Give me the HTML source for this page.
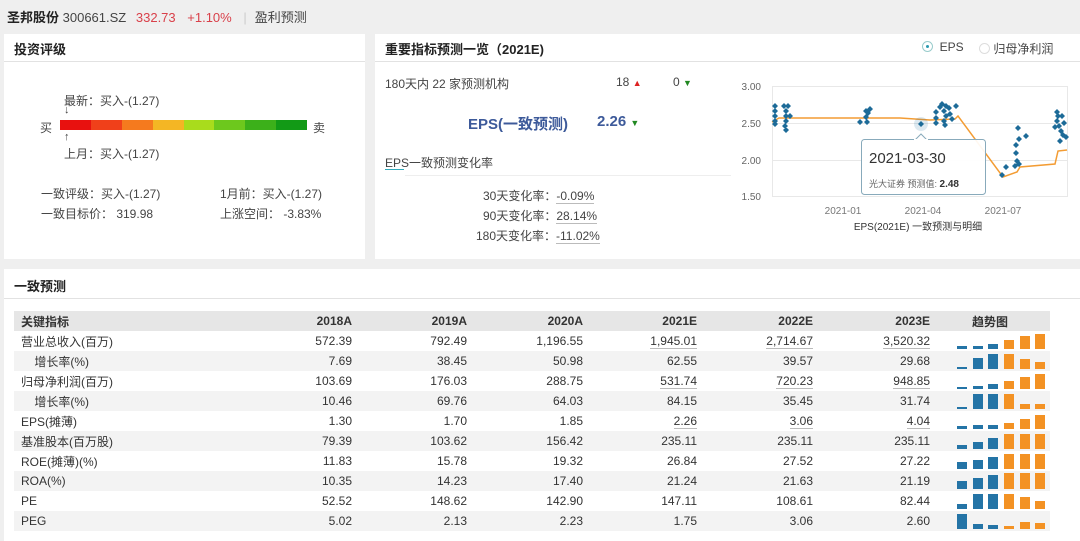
<!DOCTYPE html>
<html><head><meta charset="utf-8">
<style>
*{margin:0;padding:0;box-sizing:border-box}
body{width:1080px;height:541px;background:#efefef;font-family:"Liberation Sans","Noto Sans CJK SC",sans-serif;font-size:12px;color:#333;position:relative;overflow:hidden}
.a{position:absolute;white-space:nowrap}
.panel{position:absolute;background:#fff}
.ttl{position:absolute;left:0;right:0;top:0;height:28px;border-bottom:1px solid #e2e2e2;font-weight:bold;font-size:13px;padding:5px 0 0 10px;color:#222}
.g{color:#444}
table{position:absolute;left:14px;top:311px;width:1036px;border-collapse:collapse;font-size:12px}
td{height:20px;padding:0;text-align:right;color:#333}
td:first-child{text-align:left;padding-left:7px}
tr.h td{background:#e6e6e6;font-weight:bold;color:#333}
tr.s td{background:#f3f3f3}
.u{border-bottom:1px solid #bbb;line-height:13px;display:inline-block}
</style></head><body>
<div class="a" style="left:7px;top:7px;font-size:13px"><b style="color:#222">圣邦股份</b> <span class="g">300661.SZ</span> <span style="color:#d9404a;margin-left:6px">332.73</span> <span style="color:#d9404a;margin-left:8px">+1.10%</span> <span style="color:#ccc;margin:0 8px">|</span><span class="g">盈利预测</span></div>

<div class="panel" style="left:4px;top:34px;width:361px;height:225px">
 <div class="ttl">投资评级</div>
</div>
<div class="a g" style="left:64px;top:92px">最新：买入-(1.27)</div>
<div class="a g" style="left:64px;top:104px;font-size:11px">↓</div>
<div class="a g" style="left:40px;top:119px">买</div>
<div class="a g" style="left:313px;top:119px">卖</div>
<div class="a" style="left:60px;top:120px;width:247px;height:10px;display:flex">
<div style="flex:1;background:#e8110f"></div><div style="flex:1;background:#f0401a"></div><div style="flex:1;background:#f57a1e"></div><div style="flex:1;background:#f4b624"></div><div style="flex:1;background:#a9dc1c"></div><div style="flex:1;background:#6dc81d"></div><div style="flex:1;background:#3cb01a"></div><div style="flex:1;background:#129a16"></div></div>
<div class="a g" style="left:64px;top:131px;font-size:11px">↑</div>
<div class="a g" style="left:64px;top:145px">上月：买入-(1.27)</div>
<div class="a g" style="left:41px;top:185px">一致评级：买入-(1.27)</div>
<div class="a g" style="left:41px;top:205px">一致目标价：&nbsp;319.98</div>
<div class="a g" style="left:220px;top:185px">1月前：买入-(1.27)</div>
<div class="a g" style="left:220px;top:205px">上涨空间：&nbsp;-3.83%</div>

<div class="panel" style="left:375px;top:34px;width:705px;height:225px">
 <div class="ttl">重要指标预测一览（2021E)</div>
</div>
<div class="a g" style="left:922px;top:40px;font-size:12px"><span style="display:inline-block;width:11px;height:11px;border:1px solid #9cc;border-radius:50%;vertical-align:-1px;position:relative"><span style="position:absolute;left:3px;top:3px;width:3px;height:3px;background:#2a9ab0;border-radius:50%"></span></span>&nbsp; EPS</div>
<div class="a g" style="left:979px;top:40px"><span style="display:inline-block;width:11px;height:11px;border:1px solid #ddd;border-radius:50%;vertical-align:-1px"></span>&nbsp;归母净利润</div>
<div class="a g" style="left:385px;top:75px">180天内 22 家预测机构</div>
<div class="a g" style="left:616px;top:75px">18 <span style="color:#d22;font-size:9px">▲</span></div>
<div class="a g" style="left:673px;top:75px">0 <span style="color:#282;font-size:9px">▼</span></div>
<div class="a" style="left:468px;top:113px;font-size:15px;font-weight:bold;color:#3d5a9a">EPS(一致预测)</div>
<div class="a" style="left:597px;top:113px;font-size:15px;font-weight:bold;color:#3d5a9a">2.26 <span style="color:#282;font-size:9px">▼</span></div>
<div class="a g" style="left:385px;top:154px">EPS一致预测变化率</div>
<div class="a" style="left:385px;top:169px;width:19px;height:1px;background:#3ab"></div>
<div class="a" style="left:405px;top:175px;width:326px;height:1px;background:#eee"></div>
<div class="a g" style="left:483px;top:187px">30天变化率：<span class="u">-0.09%</span></div>
<div class="a g" style="left:483px;top:207px">90天变化率：<span class="u">28.14%</span></div>
<div class="a g" style="left:476px;top:227px">180天变化率：<span class="u">-11.02%</span></div>

<svg class="a" style="left:730px;top:75px" width="350" height="170" viewBox="730 75 350 170">
<g font-size="10" fill="#666" font-family="Liberation Sans,sans-serif" text-anchor="end">
<text x="761" y="90">3.00</text><text x="761" y="127">2.50</text><text x="761" y="164">2.00</text><text x="761" y="200">1.50</text>
</g>
<g stroke="#e8e8e8" stroke-width="1"><line x1="772" y1="86.5" x2="1067" y2="86.5"/><line x1="772" y1="123.5" x2="1067" y2="123.5"/><line x1="772" y1="160.5" x2="1067" y2="160.5"/><line x1="772" y1="196.5" x2="1067" y2="196.5"/><line x1="772.5" y1="86" x2="772.5" y2="197"/><line x1="1067.5" y1="86" x2="1067.5" y2="197"/></g>
<g font-size="10" fill="#777" font-family="Liberation Sans,sans-serif" text-anchor="middle"><text x="843" y="214">2021-01</text><text x="923" y="214">2021-04</text><text x="1003" y="214">2021-07</text></g>
<text x="918" y="230" font-size="10" fill="#333" text-anchor="middle" font-family="Liberation Sans,Noto Sans CJK SC,sans-serif">EPS(2021E) 一致预测与明细</text>
<polyline fill="none" stroke="#f39c33" stroke-width="1.5" points="772,122 779,118 900,118 930,120 955,119 958,116 1003,177 1017,172 1020,167 1055,164 1058,151 1067,150"/>
<g fill="#1d6b98">
<path d="M775 103l3 3-3 3-3-3zM775 108l3 3-3 3-3-3zM775 113l3 3-3 3-3-3zM775 118l3 3-3 3-3-3zM775 121l3 3-3 3-3-3zM784 103l3 3-3 3-3-3zM788 103l3 3-3 3-3-3zM786 108l3 3-3 3-3-3zM786 113l3 3-3 3-3-3zM786 118l3 3-3 3-3-3zM785 123l3 3-3 3-3-3zM786 127l3 3-3 3-3-3zM790 113l3 3-3 3-3-3z"/>
<path d="M860 119l3 3-3 3-3-3zM867 119l3 3-3 3-3-3zM866 114l3 3-3 3-3-3zM868 110l3 3-3 3-3-3zM870 106l3 3-3 3-3-3zM866 108l3 3-3 3-3-3z"/>
<path d="M921 121l3 3-3 3-3-3z"/>
<path d="M936 109l3 3-3 3-3-3zM936 115l3 3-3 3-3-3zM936 120l3 3-3 3-3-3zM942 101l3 3-3 3-3-3zM946 103l3 3-3 3-3-3zM944 108l3 3-3 3-3-3zM946 113l3 3-3 3-3-3zM944 118l3 3-3 3-3-3zM945 122l3 3-3 3-3-3zM949 105l3 3-3 3-3-3zM950 111l3 3-3 3-3-3zM952 116l3 3-3 3-3-3zM956 103l3 3-3 3-3-3zM940 104l3 3-3 3-3-3z"/>
<path d="M1002 172l3 3-3 3-3-3zM1006 164l3 3-3 3-3-3zM1015 163l3 3-3 3-3-3zM1017 158l3 3-3 3-3-3zM1019 161l3 3-3 3-3-3zM1016 150l3 3-3 3-3-3zM1016 142l3 3-3 3-3-3zM1019 136l3 3-3 3-3-3zM1018 125l3 3-3 3-3-3zM1026 133l3 3-3 3-3-3z"/>
<path d="M1057 109l3 3-3 3-3-3zM1058 113l3 3-3 3-3-3zM1057 118l3 3-3 3-3-3zM1059 123l3 3-3 3-3-3zM1061 128l3 3-3 3-3-3zM1063 132l3 3-3 3-3-3zM1060 138l3 3-3 3-3-3zM1064 120l3 3-3 3-3-3zM1066 134l3 3-3 3-3-3zM1055 124l3 3-3 3-3-3zM1062 113l3 3-3 3-3-3z"/>
</g>
<circle cx="921" cy="124" r="7" fill="#1d6b98" fill-opacity=".15"/>
<rect x="861.5" y="139.5" width="124" height="55" rx="3" fill="#fff" fill-opacity=".93" stroke="#8ab" />
<path d="M915 140l6-6 6 6z" fill="#fff" stroke="#8ab"/>
<rect x="914" y="139" width="14" height="2" fill="#fff"/>
<text x="869" y="163" font-size="15" fill="#333" font-family="Liberation Sans,sans-serif">2021-03-30</text>
<text x="869" y="187" font-size="9" fill="#666" font-family="Liberation Sans,Noto Sans CJK SC,sans-serif">光大证券 预测值: <tspan font-weight="bold" font-size="10" fill="#333">2.48</tspan></text>
</svg>

<div class="panel" style="left:4px;top:269px;width:1076px;height:272px">
 <div class="ttl" style="height:30px;padding-top:7px">一致预测</div>
</div>
<table>
<colgroup><col style="width:220px"><col style="width:118px"><col style="width:115px"><col style="width:116px"><col style="width:114px"><col style="width:116px"><col style="width:117px"><col></colgroup>
<tr class="h"><td>关键指标</td><td>2018A</td><td>2019A</td><td>2020A</td><td>2021E</td><td>2022E</td><td>2023E</td><td style="text-align:center">趋势图</td></tr>
<tr><td>营业总收入(百万)</td><td>572.39</td><td>792.49</td><td>1,196.55</td><td><span class="u">1,945.01</span></td><td><span class="u">2,714.67</span></td><td><span class="u">3,520.32</span></td><td></td></tr>
<tr class="s"><td>&nbsp;&nbsp;&nbsp;&nbsp;增长率(%)</td><td>7.69</td><td>38.45</td><td>50.98</td><td>62.55</td><td>39.57</td><td>29.68</td><td></td></tr>
<tr><td>归母净利润(百万)</td><td>103.69</td><td>176.03</td><td>288.75</td><td><span class="u">531.74</span></td><td><span class="u">720.23</span></td><td><span class="u">948.85</span></td><td></td></tr>
<tr class="s"><td>&nbsp;&nbsp;&nbsp;&nbsp;增长率(%)</td><td>10.46</td><td>69.76</td><td>64.03</td><td>84.15</td><td>35.45</td><td>31.74</td><td></td></tr>
<tr><td>EPS(摊薄)</td><td>1.30</td><td>1.70</td><td>1.85</td><td><span class="u">2.26</span></td><td><span class="u">3.06</span></td><td><span class="u">4.04</span></td><td></td></tr>
<tr class="s"><td>基准股本(百万股)</td><td>79.39</td><td>103.62</td><td>156.42</td><td>235.11</td><td>235.11</td><td>235.11</td><td></td></tr>
<tr><td>ROE(摊薄)(%)</td><td>11.83</td><td>15.78</td><td>19.32</td><td>26.84</td><td>27.52</td><td>27.22</td><td></td></tr>
<tr class="s"><td>ROA(%)</td><td>10.35</td><td>14.23</td><td>17.40</td><td>21.24</td><td>21.63</td><td>21.19</td><td></td></tr>
<tr><td>PE</td><td>52.52</td><td>148.62</td><td>142.90</td><td>147.11</td><td>108.61</td><td>82.44</td><td></td></tr>
<tr class="s"><td>PEG</td><td>5.02</td><td>2.13</td><td>2.23</td><td>1.75</td><td>3.06</td><td>2.60</td><td></td></tr>
</table>
<svg class="a" style="left:950px;top:331px" width="100" height="210">
<g fill="#2474a6">
<rect x="7" y="15" width="10" height="3"/><rect x="23" y="15" width="10" height="3"/><rect x="38" y="13" width="10" height="5"/>
<rect x="7" y="36" width="10" height="2"/><rect x="23" y="27" width="10" height="11"/><rect x="38" y="23" width="10" height="15"/>
<rect x="7" y="56" width="10" height="2"/><rect x="23" y="55" width="10" height="3"/><rect x="38" y="53" width="10" height="5"/>
<rect x="7" y="76" width="10" height="2"/><rect x="23" y="63" width="10" height="15"/><rect x="38" y="63" width="10" height="15"/>
<rect x="7" y="95" width="10" height="3"/><rect x="23" y="94" width="10" height="4"/><rect x="38" y="94" width="10" height="4"/>
<rect x="7" y="114" width="10" height="4"/><rect x="23" y="111" width="10" height="7"/><rect x="38" y="107" width="10" height="11"/>
<rect x="7" y="131" width="10" height="7"/><rect x="23" y="129" width="10" height="9"/><rect x="38" y="126" width="10" height="12"/>
<rect x="7" y="150" width="10" height="8"/><rect x="23" y="147" width="10" height="11"/><rect x="38" y="144" width="10" height="14"/>
<rect x="7" y="173" width="10" height="5"/><rect x="23" y="163" width="10" height="15"/><rect x="38" y="163" width="10" height="15"/>
<rect x="7" y="183" width="10" height="15"/><rect x="23" y="193" width="10" height="5"/><rect x="38" y="194" width="10" height="4"/>
</g>
<g fill="#f39224">
<rect x="54" y="9" width="10" height="9"/><rect x="70" y="5" width="10" height="13"/><rect x="85" y="3" width="10" height="15"/>
<rect x="54" y="23" width="10" height="15"/><rect x="70" y="28" width="10" height="10"/><rect x="85" y="31" width="10" height="7"/>
<rect x="54" y="50" width="10" height="8"/><rect x="70" y="46" width="10" height="12"/><rect x="85" y="43" width="10" height="15"/>
<rect x="54" y="63" width="10" height="15"/><rect x="70" y="73" width="10" height="5"/><rect x="85" y="73" width="10" height="5"/>
<rect x="54" y="92" width="10" height="6"/><rect x="70" y="88" width="10" height="10"/><rect x="85" y="84" width="10" height="14"/>
<rect x="54" y="103" width="10" height="15"/><rect x="70" y="103" width="10" height="15"/><rect x="85" y="103" width="10" height="15"/>
<rect x="54" y="123" width="10" height="15"/><rect x="70" y="123" width="10" height="15"/><rect x="85" y="123" width="10" height="15"/>
<rect x="54" y="142" width="10" height="16"/><rect x="70" y="142" width="10" height="16"/><rect x="85" y="142" width="10" height="16"/>
<rect x="54" y="163" width="10" height="15"/><rect x="70" y="166" width="10" height="12"/><rect x="85" y="170" width="10" height="8"/>
<rect x="54" y="195" width="10" height="3"/><rect x="70" y="191" width="10" height="7"/><rect x="85" y="192" width="10" height="6"/>
</g>
</svg>
</body></html>
